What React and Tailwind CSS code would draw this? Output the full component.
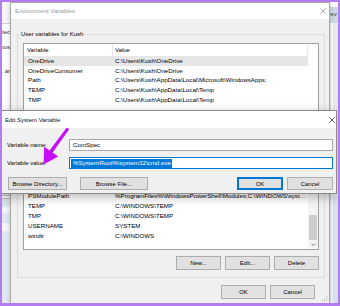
import React from "react";

const userVars = [
  ["OneDrive", "C:\\Users\\Kush\\OneDrive"],
  ["OneDriveConsumer", "C:\\Users\\Kush\\OneDrive"],
  ["Path", "C:\\Users\\Kush\\AppData\\Local\\Microsoft\\WindowsApps;"],
  ["TEMP", "C:\\Users\\Kush\\AppData\\Local\\Temp"],
  ["TMP", "C:\\Users\\Kush\\AppData\\Local\\Temp"],
  ["", ""],
];

// rows hidden under the dialog are left blank
const systemVars = [
  ["", ""],
  ["PSModulePath", "%ProgramFiles%\\WindowsPowerShell\\Modules;C:\\WINDOWS\\system32\\WindowsPowerShell\\v1.0\\Modules"],
  ["TEMP", "C:\\WINDOWS\\TEMP"],
  ["TMP", "C:\\WINDOWS\\TEMP"],
  ["USERNAME", "SYSTEM"],
  ["windir", "C:\\WINDOWS"],
];

const CloseX = ({ className }) => (
  <svg viewBox="0 0 6 6" className={className} fill="none" stroke="currentColor" strokeWidth="0.8">
    <path d="M0.4 0.4L5.6 5.6M5.6 0.4L0.4 5.6" />
  </svg>
);

const Btn = ({ children, className = "" }) => (
  <div className={`flex items-center justify-center border bg-[#e1e1e1] text-[6px] leading-none ${className}`}>
    {children}
  </div>
);

const GroupBox = ({ label, className = "", children }) => (
  <div className={`relative border border-[#dcdcdc] ${className}`}>
    {label && (
      <span className="absolute -top-[4px] left-[2px] bg-[#f0f0f0] px-[1px] text-[6px] leading-[7px]">{label}</span>
    )}
    {children}
  </div>
);

function ListView({ rows, rowClass, selected, scrollbar, header = true, className = "" }) {
  return (
    <div className={`flex overflow-hidden border border-[#a0a0a0] bg-white ${className}`}>
      <div className="flex min-w-0 flex-1 flex-col">
        <div className="flex h-[12px] shrink-0 text-[6px] leading-none">
          <div className="flex w-[89px] items-center border-r border-[#e5e5e5] pl-[3px]">{header && "Variable"}</div>
          <div className="flex flex-1 items-center border-r border-[#e5e5e5] pl-[2px]">{header && "Value"}</div>
        </div>
        {rows.map(([name, value], i) => (
          <div
            key={i}
            className={`flex shrink-0 items-center text-[6.2px] leading-none ${rowClass} ${i === selected ? "bg-[#e6e6e6]" : ""}`}
          >
            <div className="w-[89px] shrink-0 truncate pl-[4px]">{name}</div>
            <div className="min-w-0 flex-1 truncate pl-[2px] pr-[2px]">{value}</div>
          </div>
        ))}
      </div>
      {scrollbar ? (
        <div className="flex w-[10px] shrink-0 flex-col bg-[#f4f4f4]">
          <div className="h-[9px] shrink-0" />
          <div className="flex flex-1 flex-col justify-end px-[1px]">
            <div className="h-[25px] bg-[#cdcdcd]" />
          </div>
          <div className="flex h-[9px] shrink-0 items-center justify-center">
            <svg viewBox="0 0 5 3" className="h-[3px] w-[5px]" fill="none" stroke="#606060" strokeWidth="0.8">
              <path d="M0.5 0.5L2.5 2.5L4.5 0.5" />
            </svg>
          </div>
        </div>
      ) : (
        <div className="w-[10px] shrink-0" />
      )}
    </div>
  );
}

function LeftWindow() {
  return (
    <div className="absolute left-0 top-0 flex h-full w-[11px] flex-col bg-white text-[6px] leading-none text-[#333]">
      <div className="h-[24px] shrink-0 border-b border-[#cfcfcf] bg-[#f6f6f6]" />
      <div className="mt-[3px] flex h-[10px] shrink-0 items-center justify-end pr-[1px]">tec</div>
      <div className="mt-[5px] flex h-[10px] shrink-0 items-center justify-end pr-[1px]">mos</div>
      <div className="mt-[14px] flex h-[10px] shrink-0 items-center justify-end pr-[1px]">. ar</div>
      <div className="flex-1" />
      <div className="flex h-[14px] shrink-0 items-center justify-end border-y border-[#c9c9c9] bg-[#ececec] pr-[1px] text-[5px]">mvi</div>
      <div className="h-[17px] shrink-0" />
      <div className="flex h-[14px] shrink-0 items-center justify-end border-y border-[#c9c9c9] bg-[#ececec] pr-[1px] text-[5.5px]">Can</div>
      <div className="h-[3px] shrink-0 border-b border-[#c0c0c0]" />
      <div className="h-[8px] shrink-0 bg-[#dde6f0]" />
      <div className="h-[6px] shrink-0 bg-[#f2f5f9]" />
      <div className="h-[10px] shrink-0 bg-[#dfe7f1]" />
      <div className="h-[8px] shrink-0 bg-[#f4f6f9]" />
      <div className="flex-1 bg-[#e1e8f1]" />
    </div>
  );
}

function RightWindow() {
  return (
    <div className="absolute right-0 top-0 flex h-full w-[12px] flex-col bg-[#ebedf0]">
      <div className="h-[7px] shrink-0 bg-white" />
      <div className="flex h-[16px] shrink-0 items-center bg-[#cfd8e2] pl-[1px] text-[5.5px] leading-none text-[#333]">rev</div>
      <div className="flex flex-1 border-l-[3px] border-[#e9e9e9]">
        <div className="w-[2px] bg-white" />
        <div className="flex-1 bg-[#e6eaef]" />
      </div>
      <div className="flex h-[110px] shrink-0 border-l-[3px] border-[#dde3ea]">
        <div className="w-[2px] bg-[#f4f7fa]" />
        <div className="flex-1 bg-[#d9e1ea]" />
      </div>
    </div>
  );
}

function EnvWindow() {
  return (
    <div className="absolute left-[10px] top-[2px] flex h-[302px] w-[320px] flex-col border border-[#a9a9a9] bg-[#f0f0f0] shadow-[0_0_5px_rgba(0,0,0,0.18)]">
      <div className="flex h-[16px] shrink-0 items-center justify-between bg-white pl-[4px] pr-[3px] text-[6px] leading-none text-[#9a9a9a]">
        <span>Environment Variables</span>
        <CloseX className="h-[6px] w-[6px] text-[#9a9a9a]" />
      </div>
      <div className="flex flex-1 flex-col pl-[6px] pr-[4px] pt-[15px]">
        <GroupBox label="User variables for Kush" className="h-[117px] shrink-0">
          <div className="px-[5px] pt-[8px]">
            <ListView rows={userVars} rowClass="h-[9.75px]" selected={0} className="h-[103px]" />
          </div>
        </GroupBox>
        <GroupBox className="mt-[5px] shrink-0">
          <div className="px-[5px] pb-[7px] pt-[11px]">
            <ListView rows={systemVars} rowClass="h-[10px]" selected={-1} scrollbar header={false} className="h-[82px]" />
            <div className="mt-[6px] flex justify-end gap-[4px]">
              <Btn className="h-[14px] w-[45px] border-[#adadad]">New...</Btn>
              <Btn className="h-[14px] w-[45px] border-[#adadad]">Edit...</Btn>
              <Btn className="h-[14px] w-[45px] border-[#adadad]">Delete</Btn>
            </div>
          </div>
        </GroupBox>
        <div className="mr-[10px] mt-[7px] flex justify-end gap-[4px]">
          <Btn className="h-[14px] w-[45px] border-[#adadad]">OK</Btn>
          <Btn className="h-[14px] w-[45px] border-[#adadad]">Cancel</Btn>
        </div>
      </div>
      <svg viewBox="0 0 6 6" className="absolute bottom-[1px] right-[1px] h-[6px] w-[6px]" fill="#b5b5b5">
        <rect x="4" y="0" width="1" height="1" />
        <rect x="2" y="2" width="1" height="1" />
        <rect x="4" y="2" width="1" height="1" />
        <rect x="0" y="4" width="1" height="1" />
        <rect x="2" y="4" width="1" height="1" />
        <rect x="4" y="4" width="1" height="1" />
      </svg>
    </div>
  );
}

function EditDialog() {
  return (
    <div className="absolute left-0 top-[110px] flex h-[84px] w-[337px] flex-col border border-[#8c8c8c] bg-[#f0f0f0] shadow-[0_3px_10px_rgba(0,0,0,0.28)]">
      <div className="flex h-[17px] shrink-0 items-center justify-between bg-white pl-[4px] pr-[1px] text-[6px] leading-none text-[#111]">
        <span>Edit System Variable</span>
        <CloseX className="h-[6px] w-[6px] text-[#333]" />
      </div>
      <div className="flex flex-col pl-[6px] pr-[3px] pt-[11px] text-[6px] leading-none">
        <div className="flex items-center">
          <span className="w-[62px] shrink-0">Variable name:</span>
          <div className="flex h-[12px] flex-1 items-center border border-[#a8a8a8] bg-white pl-[3px] text-[6.2px]">ComSpec</div>
        </div>
        <div className="mt-[6px] flex items-center">
          <span className="w-[62px] shrink-0">Variable value:</span>
          <div className="flex h-[12px] flex-1 items-center border border-[#0078d7] bg-white pl-[1px] text-[6.2px]">
            <span className="flex h-[9px] items-center bg-[#0078d7] pl-[2px] pr-[1px] text-white">%SystemRoot%\system32\cmd.exe</span>
          </div>
        </div>
        <div className="mt-[8px] flex items-center">
          <Btn className="ml-[1px] h-[13px] w-[59px] border-[#adadad]">Browse Directory...</Btn>
          <Btn className="ml-[13px] h-[13px] w-[68px] border-[#adadad]">Browse File...</Btn>
          <div className="flex-1" />
          <Btn className="h-[13px] w-[46px] border-2 border-[#0078d7]">OK</Btn>
          <Btn className="ml-[4px] h-[13px] w-[46px] border-[#adadad]">Cancel</Btn>
        </div>
      </div>
    </div>
  );
}

function Arrow() {
  return (
    <svg viewBox="0 0 340 306" className="pointer-events-none absolute inset-0 h-[306px] w-[340px]">
      <polygon
        fill="#c60cf5"
        points="69.2,129.2 66.8,127.6 49.6,150.6 44.2,146.8 43.5,164.5 58.2,156.6 52.6,152.6"
      />
    </svg>
  );
}

export default function App() {
  return (
    <div className="relative h-[306px] w-[340px] overflow-hidden bg-[#f0f0f0] font-['Liberation_Sans',Arial,sans-serif] text-black">
      <LeftWindow />
      <RightWindow />
      <EnvWindow />
      <EditDialog />
      <Arrow />
      <div className="pointer-events-none absolute inset-0 border-2 border-b-[3px] border-[#b57cf2]" />
    </div>
  );
}
